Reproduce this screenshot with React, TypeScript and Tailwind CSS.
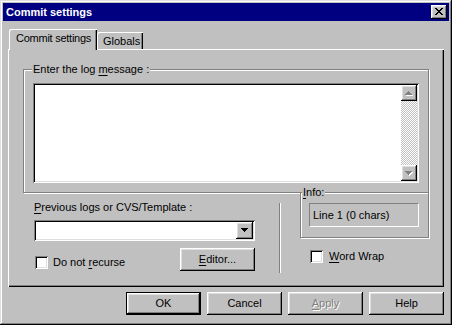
import React from 'react';

const raised =
  'shadow-[inset_-1px_-1px_#000,inset_1px_1px_#fff,inset_-2px_-2px_#808080,inset_2px_2px_#dfdfdf]';
const sunken =
  'shadow-[inset_1px_1px_#808080,inset_-1px_-1px_#fff,inset_2px_2px_#000,inset_-2px_-2px_#dfdfdf]';
const etched = 'border border-[#808080] shadow-[1px_1px_0_#fff,inset_1px_1px_0_#fff]';

const Arrow = ({ dir, color = '#000', emboss = false }: { dir: 'up' | 'down'; color?: string; emboss?: boolean }) => {
  const up = 'M3 0h1v1h-1zM2 1h3v1h-3zM1 2h5v1h-5zM0 3h7v1h-7z';
  const down = 'M0 0h7v1h-7zM1 1h5v1h-5zM2 2h3v1h-3zM3 3h1v1h-1z';
  const d = dir === 'up' ? up : down;
  return (
    <svg width="8" height="5" viewBox="0 0 8 5" shapeRendering="crispEdges">
      {emboss && <path d={d} fill="#fff" transform="translate(1 1)" />}
      <path d={d} fill={color} />
    </svg>
  );
};

const Checkbox = () => <div className={`w-[13px] h-[13px] bg-white shrink-0 ${sunken}`} />;

const Button = ({ children, isDefault = false, className = '' }: { children: React.ReactNode; isDefault?: boolean; className?: string }) => (
  <div
    className={`w-[75px] h-[23px] flex items-center justify-center bg-[#c0c0c0] ${
      isDefault ? 'border border-black' : ''
    } ${raised} ${className}`}
  >
    {children}
  </div>
);

export default function App() {
  return (
    <div
      className={`w-[452px] h-[325px] bg-[#c0c0c0] p-[3px] flex flex-col text-[11px] leading-[13px] text-black shadow-[inset_-1px_-1px_#000,inset_1px_1px_#dfdfdf,inset_-2px_-2px_#808080,inset_2px_2px_#fff] font-['Liberation_Sans',Arial,sans-serif]`}
    >
      {/* Title bar */}
      <div className="h-[18px] bg-[#000080] flex items-center justify-between pl-[3px] pr-[2px]">
        <span className="text-white font-bold">Commit settings</span>
        <div className={`w-[16px] h-[14px] bg-[#c0c0c0] flex items-center justify-center ${raised}`}>
          <svg width="8" height="7" viewBox="0 0 8 7" shapeRendering="crispEdges" className="-mt-px -ml-px">
            <path
              d="M0 0h2v1h-2zM6 0h2v1h-2zM1 1h2v1h-2zM5 1h2v1h-2zM2 2h4v1h-4zM3 3h2v1h-2zM2 4h4v1h-4zM1 5h2v1h-2zM5 5h2v1h-2zM0 6h2v1h-2zM6 6h2v1h-2z"
              fill="#000"
            />
          </svg>
        </div>
      </div>

      <div className="px-[5px] flex flex-col">
        {/* Tabs */}
        <div className="mt-[8px] h-[20px] flex items-end pl-[1px]">
          <div className="relative z-10 -mb-px h-[21px] w-[88px] bg-[#c0c0c0] pl-[7px] pt-[3px] tracking-[-0.25px] whitespace-nowrap rounded-tl-[2px] shadow-[inset_1px_1px_#fff,inset_-1px_0_#000,inset_-2px_0_#808080]">
            Commit settings
          </div>
          <div className="h-[17px] w-[46px] bg-[#c0c0c0] pl-[6px] pt-[3px] rounded-tl-[2px] shadow-[inset_1px_1px_#fff,inset_-1px_0_#000,inset_-2px_0_#808080]">
            Globals
          </div>
        </div>

        {/* Tab panel */}
        <div className="w-[436px] h-[238px] pl-[15px] pt-[20px] shadow-[inset_1px_1px_#fff,inset_-1px_-1px_#000,inset_-2px_-2px_#808080]">
          <div className={`relative w-[406px] h-[124px] ${etched}`}>
            <span className="absolute left-[8px] -top-[7px] px-[1px] bg-[#c0c0c0]">
              Enter the log <u className="underline-offset-2">m</u>essage :
            </span>
            <div className={`ml-[9px] mt-[13px] w-[386px] h-[100px] bg-white p-[2px] flex ${sunken}`}>
              <div className="flex-1" />
              <div className="w-[16px] flex flex-col">
                <div className={`h-[16px] bg-[#c0c0c0] flex items-center justify-center ${raised}`}>
                  <Arrow dir="up" color="#808080" emboss />
                </div>
                <div className="flex-1 bg-[image:repeating-conic-gradient(#c0c0c0_0_25%,#fff_0_50%)] bg-[length:2px_2px]" />
                <div className={`h-[16px] bg-[#c0c0c0] flex items-center justify-center ${raised}`}>
                  <Arrow dir="down" color="#808080" emboss />
                </div>
              </div>
            </div>
          </div>

          <div className="flex">
            {/* Left column */}
            <div className="ml-[11px] w-[221px] flex flex-col">
              <div className="mt-[8px] h-[13px]">
                <u className="underline-offset-2">P</u>revious logs or CVS/Template :
              </div>
              <div className={`mt-[6px] h-[21px] bg-white p-[2px] flex justify-end ${sunken}`}>
                <div className={`w-[17px] bg-[#c0c0c0] flex items-center justify-center ${raised}`}>
                  <Arrow dir="down" />
                </div>
              </div>
              <div className="mt-[7px] flex justify-between items-start">
                <div className="flex items-center mt-[8px] ml-[1px]">
                  <Checkbox />
                  <span className="ml-[5px]">
                    Do not <u className="underline-offset-2">r</u>ecurse
                  </span>
                </div>
                <Button>
                  <u className="underline-offset-2">E</u>ditor...
                </Button>
              </div>
            </div>

            {/* Separator */}
            <div className="ml-[24px] mt-[10px] h-[70px] w-[2px] border-l border-[#808080] border-r border-r-white" />

            {/* Right column */}
            <div className="ml-[19px] -mt-px flex flex-col">
              <div className={`relative w-[129px] h-[46px] ${etched}`}>
                <span className="absolute left-[1px] -top-[7px] px-[1px] bg-[#c0c0c0]">
                  <u className="underline-offset-2">I</u>nfo:
                </span>
                <div className="ml-[8px] mt-[10px] w-[110px] h-[24px] border border-[#808080] border-r-white border-b-white flex items-center pl-[3px]">
                  Line 1 (0 chars)
                </div>
              </div>
              <div className="mt-[12px] ml-[10px] flex items-center">
                <Checkbox />
                <span className="ml-[6px]">
                  <u className="underline-offset-2">W</u>ord Wrap
                </span>
              </div>
            </div>
          </div>
        </div>

        {/* Dialog buttons */}
        <div className="mt-[5px] flex justify-end gap-[6px]">
          <Button isDefault>OK</Button>
          <Button>Cancel</Button>
          <Button>
            <span className="text-[#808080] [text-shadow:1px_1px_0_#fff]">
              <u className="underline-offset-2">A</u>pply
            </span>
          </Button>
          <Button>Help</Button>
        </div>
      </div>
    </div>
  );
}
